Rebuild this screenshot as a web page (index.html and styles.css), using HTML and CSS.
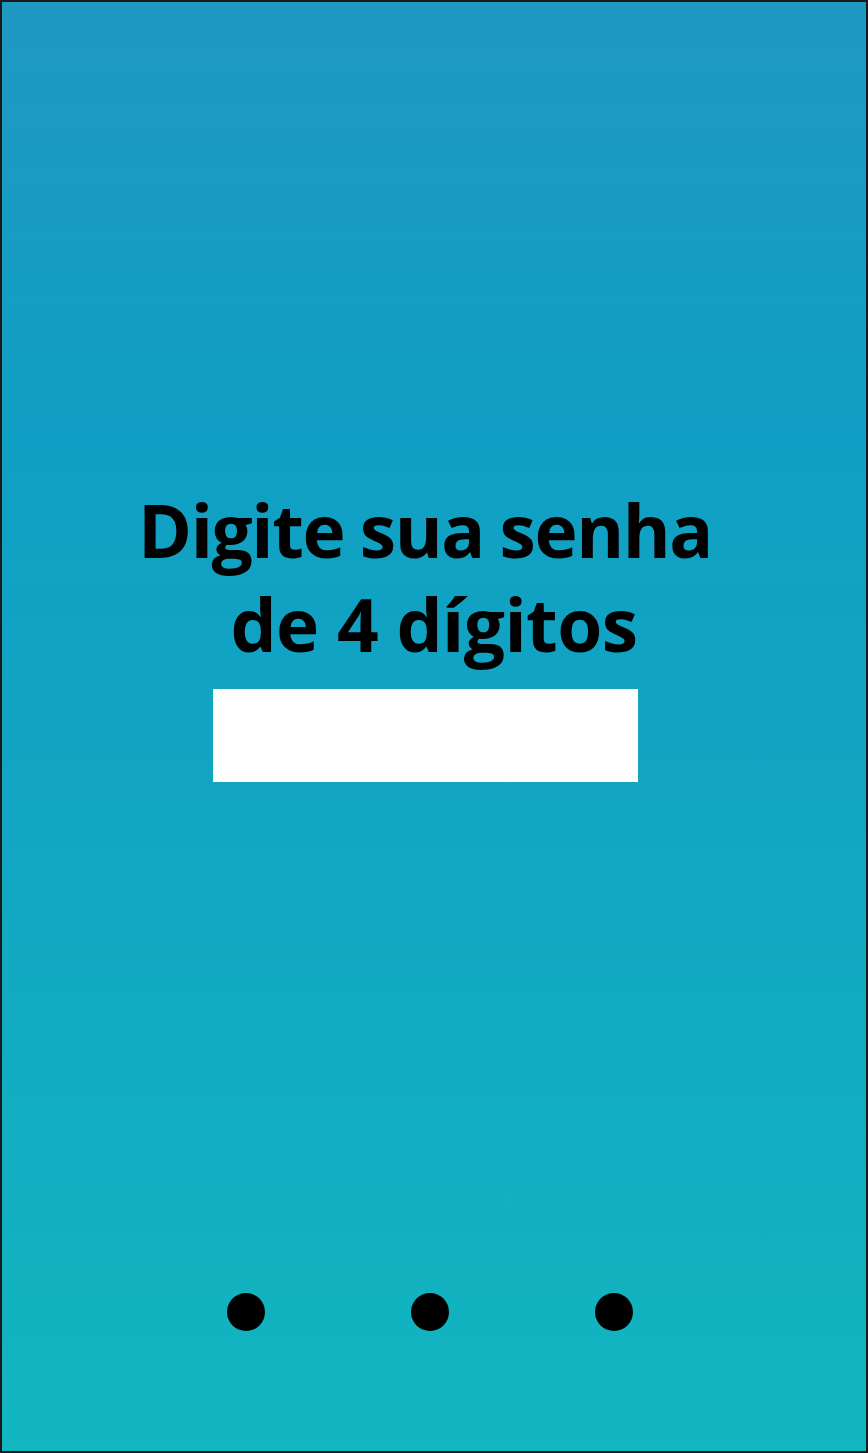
FILE: index.html
```html
<!DOCTYPE html>
<html lang="pt">
<head>
<meta charset="utf-8">
<title>Senha</title>
<link rel="stylesheet" href="styles.css">
</head>
<body>
<main class="screen">
  <h1 class="title"><span class="line line-first">Digite sua senha</span><span class="line line-second">de 4 dígitos</span></h1>
  <div class="pin-field"></div>
  <div class="dots">
    <span class="dot"></span>
    <span class="dot"></span>
    <span class="dot"></span>
  </div>
</main>
</body>
</html>
```
FILE: styles.css
```css
html, body {
  margin: 0;
  padding: 0;
  background: #ffffff;
}

.screen {
  box-sizing: border-box;
  width: 868px;
  height: 1453px;
  border: 2px solid #1a1a1a;
  background: linear-gradient(180deg, #1f98c3 0%, #109fc4 30%, #12a7c2 60%, #11b6c0 100%);
  display: flex;
  flex-direction: column;
  padding-top: 481px;
  padding-bottom: 120px;
}

.title {
  margin: 0;
  font-family: "Open Sans", "Liberation Sans", sans-serif;
  font-weight: 700;
  font-size: 73px;
  line-height: 94px;
  color: #000000;
  text-align: center;
  display: flex;
  flex-direction: column;
  align-items: center;
}

.line {
  display: block;
  white-space: nowrap;
}

.line-first {
  letter-spacing: -1.4px;
  word-spacing: -2px;
  padding-right: 18px;
}

.line-second {
  letter-spacing: -0.6px;
}

.pin-field {
  align-self: flex-start;
  margin-left: 211px;
  margin-top: 18px;
  width: 425px;
  height: 93px;
  background: #ffffff;
}

.dots {
  margin-top: auto;
  display: flex;
  gap: 146px;
  padding-left: 225px;
}

.dot {
  width: 38px;
  height: 38px;
  border-radius: 50%;
  background: #000000;
}
```
